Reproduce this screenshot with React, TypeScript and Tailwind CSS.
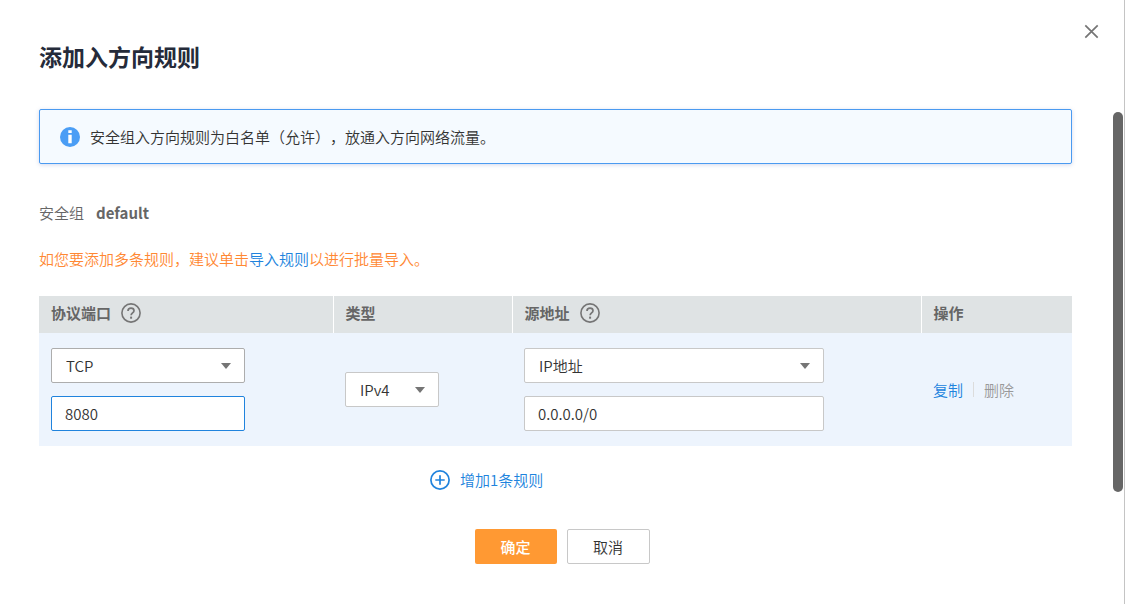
import { useState } from 'react';
import type { ReactNode, SelectHTMLAttributes } from 'react';

interface SelectBoxProps extends SelectHTMLAttributes<HTMLSelectElement> {
  options: string[];
  width: string;
  border?: string;
}

function SelectBox({ options, width, border = 'border-[#c8c8c8]', ...rest }: SelectBoxProps) {
  return (
    <div className={`relative ${width}`}>
      <select
        className={`block h-[35px] w-full appearance-none rounded-xs border bg-white pr-8 pl-3.5 text-[15px] text-[#333] outline-none ${border}`}
        {...rest}
      >
        {options.map((option) => (
          <option key={option}>{option}</option>
        ))}
      </select>
      <svg
        className="pointer-events-none absolute top-[15px] right-[14px] h-[6px] w-[10px]"
        viewBox="0 0 10 6"
        fill="#757575"
      >
        <path d="M0 0h10L5 6z" />
      </svg>
    </div>
  );
}

function HelpIcon() {
  return (
    <svg className="h-5 w-5 shrink-0" viewBox="0 0 20 20" fill="none" stroke="#757575">
      <circle cx="10" cy="10" r="9.1" strokeWidth="1.6" />
      <path d="M7 7.9c0-1.8 1.2-2.7 3-2.7s3 1 3 2.5c0 2.1-2.9 2.4-2.9 4.6" strokeWidth="1.7" />
      <path d="M10.1 13.6v2.1" strokeWidth="2" />
    </svg>
  );
}

function HeadCell({ children, help, last }: { children: ReactNode; help?: string; last?: boolean }) {
  return (
    <th className={`h-[37px] px-3 pb-1 text-left font-bold text-[#666] ${last ? '' : 'border-r border-white'}`}>
      <div className="flex items-center gap-2.5">
        <span>{children}</span>
        {help && (
          <button type="button" aria-label={help}>
            <HelpIcon />
          </button>
        )}
      </div>
    </th>
  );
}

export default function App() {
  const [port, setPort] = useState('8080');
  const [source, setSource] = useState('0.0.0.0/0');

  return (
    <div className="relative min-h-screen border-r border-[#c4c4c4] bg-white pb-10 font-['Noto_Sans_CJK_SC',sans-serif] text-[15px] leading-5 font-[350] text-[#333]">
      <button type="button" aria-label="关闭" className="absolute top-6 right-[25px]">
        <svg className="h-[15px] w-[15px]" viewBox="0 0 15 15" fill="none" stroke="#757575" strokeWidth="1.7">
          <path d="M1.3 1.3l12.4 12.4M13.7 1.3L1.3 13.7" />
        </svg>
      </button>
      <div className="absolute top-28 right-px h-[380px] w-2.5 rounded-full bg-[#666]" />

      <main className="pt-10 pr-[52px] pl-[39px]">
        <h1 className="text-[23px] leading-8 font-bold text-[#252b3a]">添加入方向规则</h1>

        <div className="mt-[37px] flex h-[55px] items-center gap-2.5 rounded-xs border border-[#4a9af0] bg-[#f5faff] px-5 shadow-[0_1px_4px_rgba(80,100,180,0.25)]">
          <svg className="h-5 w-5 shrink-0" viewBox="0 0 20 20">
            <circle cx="10" cy="10" r="10" fill="#4a9df5" />
            <path d="M8.3 3.2h3.4v2.8H8.3zM8.3 7.8h3.4v8.4H8.3z" fill="#fff" />
          </svg>
          <p className="[text-spacing-trim:space-all]">安全组入方向规则为白名单（允许），放通入方向网络流量。</p>
        </div>

        <p className="mt-[39px] flex gap-3 text-[#666]">
          <span>安全组</span>
          <b>default</b>
        </p>

        <p className="mt-[26px] text-[#ff8833]">
          如您要添加多条规则，建议单击
          <a href="#import" className="text-[#2083dd]">
            导入规则
          </a>
          以进行批量导入。
        </p>

        <table className="mt-[27px] w-full table-fixed">
          <colgroup>
            <col className="w-[294px]" />
            <col className="w-[179px]" />
            <col />
            <col className="w-[151px]" />
          </colgroup>
          <thead>
            <tr className="bg-[#dfe3e4]">
              <HeadCell help="协议端口说明">协议端口</HeadCell>
              <HeadCell>类型</HeadCell>
              <HeadCell help="源地址说明">源地址</HeadCell>
              <HeadCell last>操作</HeadCell>
            </tr>
          </thead>
          <tbody>
            <tr className="bg-[#edf4fd]">
              <td className="px-3 py-[15px]">
                <SelectBox aria-label="协议" width="w-[194px]" border="border-[#adadad]" options={['TCP', 'UDP', 'ICMP']} />
                <input
                  aria-label="端口"
                  className="mt-[13px] block h-[35px] w-[194px] rounded-xs border border-[#2083dd] bg-white px-[13px] outline-none"
                  value={port}
                  onChange={(e) => setPort(e.target.value)}
                />
              </td>
              <td className="px-3">
                <SelectBox aria-label="类型" width="w-[94px]" options={['IPv4', 'IPv6']} />
              </td>
              <td className="px-3">
                <SelectBox aria-label="源地址类型" width="w-[300px]" options={['IP地址', '安全组']} />
                <input
                  aria-label="源地址"
                  className="mt-[13px] block h-[35px] w-[300px] rounded-xs border border-[#c8c8c8] bg-white px-[13px] outline-none"
                  value={source}
                  onChange={(e) => setSource(e.target.value)}
                />
              </td>
              <td className="px-3">
                <div className="flex items-center">
                  <button type="button" className="text-[#2083dd]">
                    复制
                  </button>
                  <span className="mx-2.5 h-[15px] w-px bg-[#dcdcdc]" />
                  <button type="button" className="text-[#999]">
                    删除
                  </button>
                </div>
              </td>
            </tr>
          </tbody>
        </table>

        <div className="mt-6 pl-[391px]">
          <button type="button" className="flex items-center gap-2.5 text-[#2083dd]">
            <svg className="h-5 w-5" viewBox="0 0 20 20" fill="none" stroke="currentColor" strokeWidth="1.7">
              <circle cx="10" cy="10" r="9.1" />
              <path d="M10 5.3v9.4M5.3 10h9.4" />
            </svg>
            增加1条规则
          </button>
        </div>
      </main>

      <footer className="mt-[39px] flex justify-center gap-2.5">
        <button type="button" className="h-[35px] w-[82px] rounded-xs bg-[#ff9933] font-medium text-white">
          确定
        </button>
        <button type="button" className="h-[35px] w-[83px] rounded-xs border border-[#c8c8c8] bg-white">
          取消
        </button>
      </footer>
    </div>
  );
}
